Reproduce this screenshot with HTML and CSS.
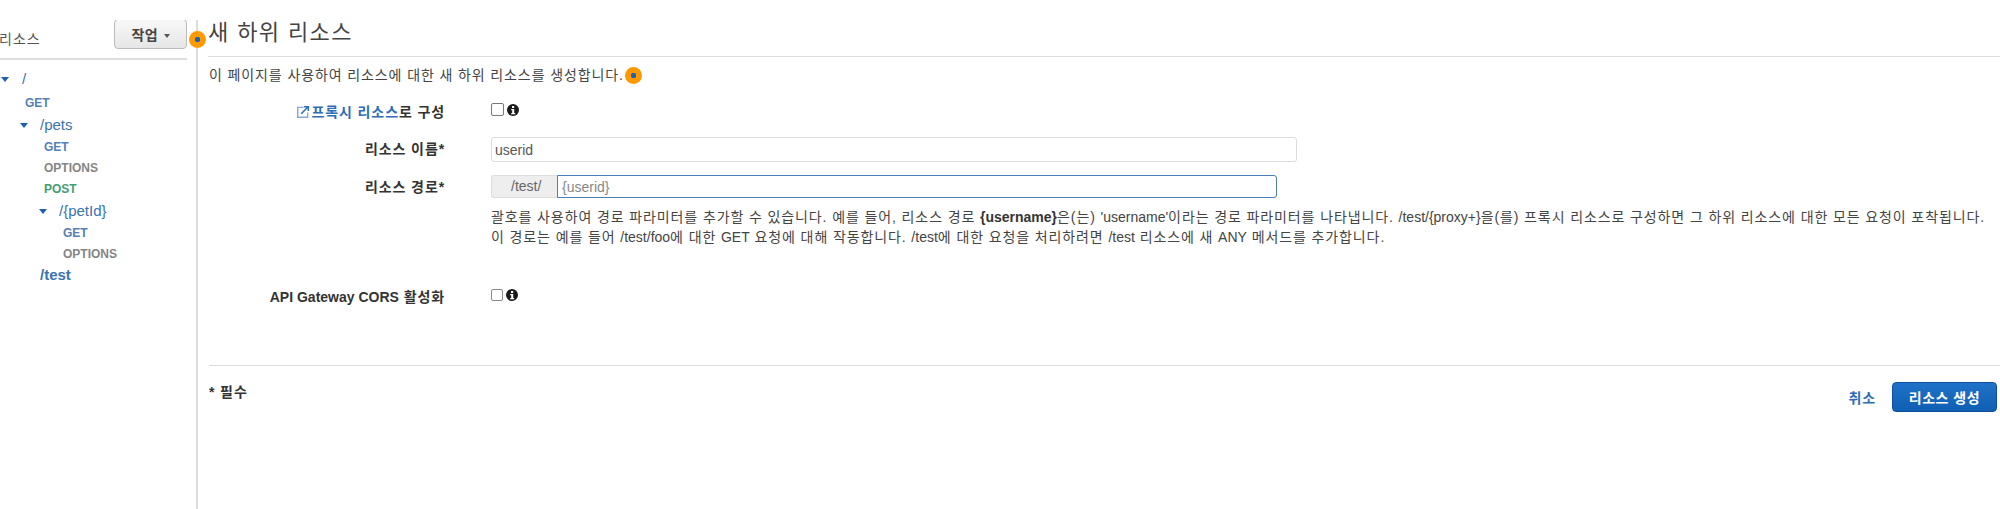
FILE: index.html
```html
<!DOCTYPE html>
<html lang="ko">
<head>
<meta charset="utf-8">
<title>새 하위 리소스</title>
<link rel="stylesheet" href="styles.css">
</head>
<body>
<div class="page">
  <aside class="sidebar">
    <div class="side-head">
      <span class="side-title">리소스</span>
      <button class="actions" type="button">작업 <span class="btn-caret"></span></button>
    </div>
    <ul class="tree">
      <li class="res res-root"><span class="arrow"></span>/</li>
      <li class="method get">GET</li>
      <li>
        <ul class="sub">
          <li class="res"><span class="arrow"></span>/pets</li>
          <li class="method get ind">GET</li>
          <li class="method opt ind">OPTIONS</li>
          <li class="method post ind">POST</li>
          <li>
            <ul class="sub">
              <li class="res"><span class="arrow"></span>/{petId}</li>
              <li class="method get ind">GET</li>
              <li class="method opt ind">OPTIONS</li>
            </ul>
          </li>
          <li class="res res-sel">/test</li>
        </ul>
      </li>
    </ul>
    <span class="dot dot-side"></span>
  </aside>
  <main class="main">
    <h1 class="title">새 하위 리소스</h1>
    <p class="intro">이 페이지를 사용하여 리소스에 대한 새 하위 리소스를 생성합니다.<span class="dot-inline"></span></p>
    <div class="form">
      <div class="label lbl-proxy"><svg class="ext" viewBox="0 0 12 12" width="14" height="14"><path d="M6.5 2H1.5v8.5H10V6.5" fill="none" stroke="#8ba7cf" stroke-width="1.2"/><path d="M4.5 7.5L10 2M6.8 1.4h3.8v3.8" fill="none" stroke="#2f6db5" stroke-width="1.3"/></svg><a class="link">프록시 리소스</a>로 구성</div>
      <div class="ctl ctl-check"><span class="check"></span><svg class="info" viewBox="0 0 12 12" width="12" height="12"><circle cx="6" cy="6" r="6" fill="#1a1a1a"/><rect x="5" y="2" width="2.2" height="2" fill="#fff"/><path d="M4.2 5h3v4h1v1.2H4.2V9h1V6.2h-1z" fill="#fff"/></svg></div>

      <label class="label lbl-name">리소스 이름*</label>
      <div class="ctl ctl-name"><input class="input name-input" type="text" value="userid"></div>

      <label class="label lbl-path">리소스 경로*</label>
      <div class="ctl ctl-path">
        <div class="path-group"><span class="prefix">/test/</span><input class="input path-input" type="text" placeholder="{userid}"></div>
        <p class="help">괄호를 사용하여 경로 파라미터를 추가할 수 있습니다. 예를 들어, 리소스 경로 <b class="lat">{username}</b>은(는) <span class="lat">'username'</span>이라는 경로 파라미터를 나타냅니다. <span class="lat">/test/{proxy+}</span>을(를) 프록시 리소스로 구성하면 그 하위 리소스에 대한 모든 요청이 포착됩니다.<br>이 경로는 예를 들어 <span class="lat">/test/foo</span>에 대한 <span class="lat">GET</span> 요청에 대해 작동합니다. <span class="lat">/test</span>에 대한 요청을 처리하려면 <span class="lat">/test</span> 리소스에 새 <span class="lat">ANY</span> 메서드를 추가합니다.</p>
      </div>

      <div class="label lbl-cors"><span class="lat">API Gateway CORS</span> 활성화</div>
      <div class="ctl ctl-cors"><span class="check check-light"></span><svg class="info" viewBox="0 0 12 12" width="12" height="12"><circle cx="6" cy="6" r="6" fill="#1a1a1a"/><rect x="5" y="2" width="2.2" height="2" fill="#fff"/><path d="M4.2 5h3v4h1v1.2H4.2V9h1V6.2h-1z" fill="#fff"/></svg></div>
    </div>
    <div class="footer">
      <span class="required">* 필수</span>
      <div class="footer-actions">
        <a class="cancel">취소</a>
        <button class="primary" type="button">리소스 생성</button>
      </div>
    </div>
  </main>
</div>
</body>
</html>
```
FILE: styles.css
```css
* { box-sizing: border-box; }
html, body { margin: 0; padding: 0; background: #fff; }
body {
  font-family: "Liberation Sans", "Noto Sans CJK KR", sans-serif;
  font-size: 14px;
  letter-spacing: .89px;
  color: #444;
}
.lat { letter-spacing: 0; }
.page { display: flex; height: 509px; width: 2000px; overflow: hidden; }

.sidebar {
  position: relative;
  flex: none;
  width: 198px;
  margin-top: 20px;
  padding-right: 9px;
  border-right: 2px solid #dcdcdc;
}
.side-head {
  display: flex;
  justify-content: space-between;
  align-items: flex-end;
  height: 40px;
  border-bottom: 2px solid #ddd;
  padding-bottom: 9px;
  overflow: hidden;
}
.side-title { font-size: 14px; line-height: 20px; margin-left: -1px; color: #555; letter-spacing: 1px; }
.actions {
  width: 73px;
  height: 30px;
  padding: 0;
  border: 1px solid #bbb;
  border-radius: 4px;
  background: linear-gradient(#f8f8f8, #e6e6e6);
  font: bold 14px "Liberation Sans", "Noto Sans CJK KR", sans-serif;
  letter-spacing: .5px;
  color: #444;
}
.btn-caret {
  display: inline-block;
  width: 0; height: 0;
  margin-left: 1px;
  vertical-align: middle;
  border: 3.5px solid transparent;
  border-top: 4px solid #555;
  border-bottom: 0;
}
.tree, .sub { list-style: none; margin: 0; padding: 0; letter-spacing: 0; }
.tree { padding: 8px 0 0 0; }
.sub { padding-left: 19px; }
.res {
  position: relative;
  height: 22px;
  line-height: 22px;
  margin-top: 1px;
  padding-left: 21px;
  font-size: 15px;
  color: #3b73af;
}
.res-root { margin-bottom: 3px; margin-top: 0; padding-left: 22px; }
.res-sel { font-weight: bold; margin-top: 0; padding-left: 40px; margin-left: -19px; }
.arrow {
  position: absolute;
  left: 1px;
  top: 9px;
  width: 0; height: 0;
  border-left: 4.5px solid transparent;
  border-right: 4.5px solid transparent;
  border-top: 5px solid #1f5fb0;
}
.method {
  height: 20px;
  line-height: 20px;
  margin-top: 1px;
  font-size: 12px;
  font-weight: bold;
  padding-left: 25px;
}
.ind { padding-left: 25px; }
.get { color: #5580b5; }
.opt { color: #858585; }
.post { color: #469c72; }

.dot {
  position: absolute;
  right: -10px;
  top: 10.5px;
  width: 17px; height: 17px;
  border-radius: 50%;
  background: radial-gradient(circle, #1f62b5 0 2.5px, #ff9900 3px);
}
.dot-inline {
  display: inline-block;
  width: 17px; height: 17px;
  margin-left: 1px;
  vertical-align: -4px;
  border-radius: 50%;
  background: radial-gradient(circle, #1f62b5 0 2.5px, #ff9900 3px);
}

.main { flex: 1; min-width: 0; padding: 0 0 0 11px; }
.title {
  margin: 0 0 0 -1px;
  height: 57px;
  padding: 18px 0 0 0;
  border-bottom: 1px solid #ddd;
  font-size: 22px;
  font-weight: normal;
  line-height: 30px;
  letter-spacing: 1.4px;
  color: #444;
}
.intro { margin: 8px 0 0; line-height: 20px; height: 20px; }

.form {
  display: grid;
  grid-template-columns: 236px 1fr;
  column-gap: 46px;
  margin-top: 17px;
}
.label { text-align: right; font-weight: bold; color: #333; line-height: 20px; }
.lbl-name, .ctl-name { margin-top: 15px; }
.lbl-path, .ctl-path { margin-top: 13px; }
.lbl-cors, .ctl-cors { margin-top: 40px; }
.lbl-name { line-height: 25px; }
.lbl-path { line-height: 24px; }
.ext { vertical-align: -2px; margin-right: 2px; }
.link { color: #2f6db5; }
.ctl-check, .ctl-cors { display: flex; align-items: flex-start; gap: 3px; height: 20px; }
.ctl-check { padding-top: 1px; }
.ctl-cors { padding-top: 1px; }
.check {
  width: 13px; height: 13px;
  border: 1px solid #777;
  border-radius: 2px;
  background: #fff;
}
.check-light { width: 12px; height: 12px; border-color: #888; margin-top: 1px; }
.info { margin-top: 1px; }
.input {
  display: block;
  height: 25px;
  padding: 0 4px;
  border: 1px solid #ddd;
  border-radius: 3px;
  background: #fff;
  font: 14px "Liberation Sans", "Noto Sans CJK KR", sans-serif;
  color: #555;
  outline: none;
}
.name-input { width: 806px; padding-left: 3px; }
.path-group { display: flex; width: 786px; height: 23px; letter-spacing: 0; }
.prefix {
  flex: none;
  width: 66px;
  padding-left: 19px;
  border: 1px solid #ddd;
  border-right: 0;
  border-radius: 3px 0 0 3px;
  background: #eee;
  line-height: 21px;
  color: #666;
}
.path-input {
  flex: 1;
  height: 23px;
  border: 1px solid #4a7fb8;
  border-radius: 0 3px 3px 0;
}
.path-input::placeholder { color: #888; opacity: 1; }
.help { margin: 10px 0 0; line-height: 19.5px; white-space: nowrap; color: #444; }
.help b { color: #333; }

.footer {
  display: flex;
  justify-content: space-between;
  align-items: flex-start;
  margin-top: 58px;
  padding: 16px 3px 0 0;
  border-top: 1px solid #ddd;
}
.required { font-weight: bold; color: #333; line-height: 20px; }
.footer-actions { display: flex; align-items: center; gap: 16px; }
.cancel { font-weight: bold; color: #2f6db5; }
.primary {
  width: 105px;
  height: 30px;
  padding: 0;
  border: 1px solid #0f4f99;
  border-radius: 4px;
  background: linear-gradient(#1e72c7, #0f5fb3);
  color: #fff;
  font: bold 14px "Liberation Sans", "Noto Sans CJK KR", sans-serif;
  letter-spacing: .5px;
}
```
